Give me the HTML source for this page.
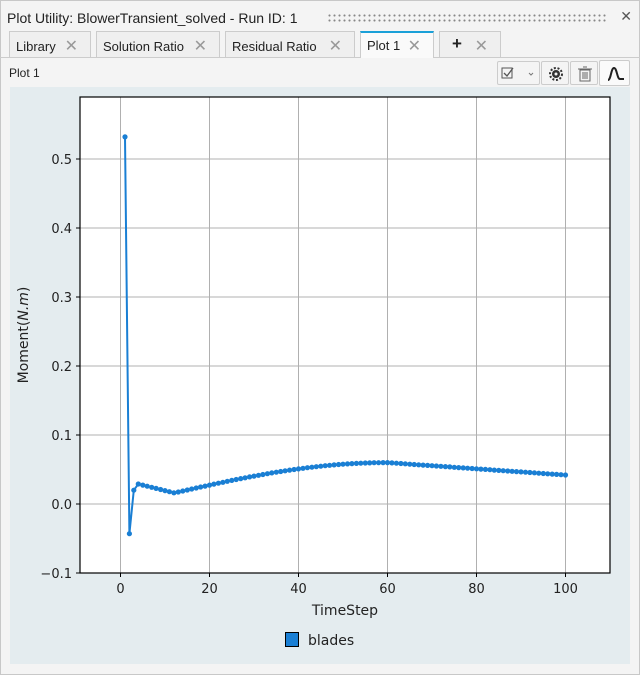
<!DOCTYPE html>
<html><head><meta charset="utf-8"><style>
body{margin:0;width:640px;height:675px;background:#f4f4f4;font-family:"DejaVu Sans","Liberation Sans",sans-serif;position:relative;overflow:hidden}
.win{position:absolute;left:0;top:0;width:638px;height:673px;border:1px solid #c8c8c8;background:#f4f4f4}
.title{position:absolute;left:7px;top:10px;font-size:14px;color:#222;font-family:"Liberation Sans",sans-serif}
.dots{position:absolute;left:327px;top:13px;width:280px;height:10px;background-image:radial-gradient(circle,#888 0.9px,transparent 1.2px);background-size:5px 5px}
.x{position:absolute;right:8px;top:9px;font-size:14px;color:#555}
.tab{position:absolute;top:31px;height:26px;border:1px solid #ccc;border-bottom:none;background:#efefef;font-family:"Liberation Sans",sans-serif;font-size:13px;color:#222;box-sizing:border-box;padding:7px 0 0 6px}
.tab i{font-style:normal;color:#999;position:absolute;right:12px;top:4px;font-size:16px}
.tab.act{background:#fafafa;border-top:2px solid #1aa0d8;top:31px;height:27px}
.lbl{position:absolute;left:9px;top:66px;font-size:12px;color:#222;font-family:"Liberation Sans",sans-serif}
.btn{position:absolute;top:61px;height:24px;border:1px solid #ccc;border-radius:2px;background:#f4f4f4;box-sizing:border-box}
.pb{position:absolute;left:10px;top:87px;width:620px;height:577px;background:#e4ecef}
</style></head><body>
<div class="win"></div>
<div class="title">Plot Utility: BlowerTransient_solved - Run ID: 1</div>
<div class="dots"></div>
<div class="x">✕</div>
<div style="position:absolute;left:0;top:57px;width:640px;border-top:1px solid #ccc"></div>
<div class="tab" style="left:9px;width:82px">Library<i>✕</i></div>
<div class="tab" style="left:96px;width:124px">Solution Ratio<i>✕</i></div>
<div class="tab" style="left:225px;width:130px">Residual Ratio<i>✕</i></div>
<div class="tab act" style="left:360px;width:74px;padding-top:5px">Plot 1<i style="top:3px">✕</i></div>
<div class="tab" style="left:439px;width:62px"><b style="position:absolute;left:12px;top:2px;font-size:17px">+</b><i>✕</i></div>
<div class="lbl">Plot 1</div>
<div class="btn" style="left:497px;width:43px"><svg width="43" height="24"><rect x="4" y="6" width="10" height="10" fill="none" stroke="#555"/><path d="M6 11l3 3 6-8" fill="none" stroke="#555" stroke-width="1.3"/><path d="M31 11l2 2 2-2" fill="none" stroke="#777"/></svg></div>
<div class="btn" style="left:541px;width:28px"><svg width="28" height="24"><circle cx="14" cy="12" r="4" fill="#333"/><circle cx="14" cy="12" r="6" fill="none" stroke="#333" stroke-width="2" stroke-dasharray="2 1.7"/><circle cx="14" cy="12" r="1.5" fill="#f4f4f4"/></svg></div>
<div class="btn" style="left:570px;width:28px"><svg width="28" height="24"><rect x="9" y="8" width="10" height="11" fill="none" stroke="#666"/><path d="M7 7h14M12 5h4M12 10v7M14 10v7M16 10v7" stroke="#666"/></svg></div>
<div class="btn" style="left:599px;width:31px;height:26px;top:60px;background:#fafafa"><svg width="31" height="26"><path d="M8 19 C11 19 11 7 14 7 C17 7 17 18 20 18 H24" fill="none" stroke="#222" stroke-width="2"/></svg></div>
<div class="pb"></div>
<svg id="p" width="640" height="675" style="position:absolute;left:0;top:0" font-family="DejaVu Sans, sans-serif" font-size="13" fill="#222"></svg>
<script>
var s=document.getElementById('p'),h='';
function X(t){return 120.5+t*4.45}function Y(v){return 504-v*690}
h+='<rect x="80" y="97" width="530" height="476" fill="#fff"/>';
[0,20,40,60,80,100].forEach(function(t){var x=X(t);h+='<line x1="'+x+'" y1="97" x2="'+x+'" y2="573" stroke="#b0b0b0"/><line x1="'+x+'" y1="573" x2="'+x+'" y2="577" stroke="#000"/><text x="'+x+'" y="593" text-anchor="middle">'+t+'</text>'});
[-0.1,0,0.1,0.2,0.3,0.4,0.5].forEach(function(v){var y=Y(v);h+='<line x1="80" y1="'+y+'" x2="610" y2="'+y+'" stroke="#b0b0b0"/><line x1="76" y1="'+y+'" x2="80" y2="'+y+'" stroke="#000"/><text x="72" y="'+(y+5)+'" text-anchor="end">'+(v<0?'−0.1':v.toFixed(1))+'</text>'});
h+='<rect x="80" y="97" width="530" height="476" fill="none" stroke="#000" stroke-width="1.2"/>';
var pts=[];
for(var t=1;t<=100;t++){var v;
if(t==1)v=0.532;else if(t==2)v=-0.043;else if(t==3)v=0.02;else if(t==4)v=0.029;
else if(t<=12)v=0.029-(t-4)*0.0016;
else if(t<=60)v=0.016+0.044*Math.sin((t-12)/48*Math.PI/2);
else v=0.06-0.018*(t-60)/40;
pts.push(X(t).toFixed(1)+','+Y(v).toFixed(1));}
h+='<polyline points="'+pts.join(' ')+'" fill="none" stroke="#1a7fd4" stroke-width="2"/>';
pts.forEach(function(p){var a=p.split(',');h+='<circle cx="'+a[0]+'" cy="'+a[1]+'" r="2.6" fill="#1a7fd4"/>'});
h+='<text x="345" y="615" text-anchor="middle" font-size="14">TimeStep</text>';
h+='<text transform="translate(28 335) rotate(-90)" text-anchor="middle" font-size="14">Moment(<tspan font-style="italic">N.m</tspan>)</text>';
h+='<rect x="285.5" y="632.5" width="13" height="14" fill="#1a7fd4" stroke="#000"/><text x="308" y="645" font-size="14">blades</text>';
s.innerHTML=h;
</script>
</body></html>
